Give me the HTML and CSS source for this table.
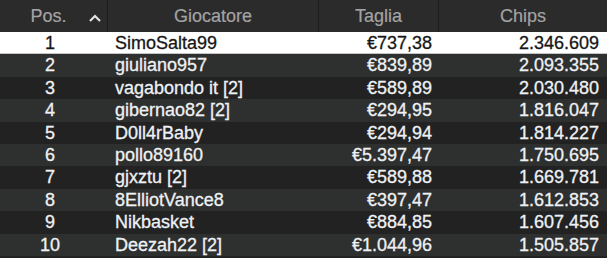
FILE: index.html
```html
<!DOCTYPE html>
<html lang="it">
<head>
  <meta charset="UTF-8">
  <title>Classifica</title>
  <link rel="stylesheet" href="styles.css">
</head>
<body>

  <div class="board">
    <div class="row head">
      <div class="cell pos-head">
        <span class="label">Pos.</span>
        <svg class="sort" width="12" height="8" viewBox="0 0 12 8">
          <polyline points="1,7 6,2 11,7" fill="none" stroke="#e2e2e2" stroke-width="2.2"/>
        </svg>
      </div>
      <div class="cell">Giocatore</div>
      <div class="cell">Taglia</div>
      <div class="cell">Chips</div>
    </div>

    <div class="row me">
      <div class="cell pos">1</div>
      <div class="cell name">SimoSalta99</div>
      <div class="cell num bounty">€737,38</div>
      <div class="cell num chips">2.346.609</div>
    </div>
    <div class="row">
      <div class="cell pos">2</div>
      <div class="cell name">giuliano957</div>
      <div class="cell num bounty">€839,89</div>
      <div class="cell num chips">2.093.355</div>
    </div>
    <div class="row">
      <div class="cell pos">3</div>
      <div class="cell name">vagabondo it [2]</div>
      <div class="cell num bounty">€589,89</div>
      <div class="cell num chips">2.030.480</div>
    </div>
    <div class="row">
      <div class="cell pos">4</div>
      <div class="cell name">gibernao82 [2]</div>
      <div class="cell num bounty">€294,95</div>
      <div class="cell num chips">1.816.047</div>
    </div>
    <div class="row">
      <div class="cell pos">5</div>
      <div class="cell name">D0ll4rBaby</div>
      <div class="cell num bounty">€294,94</div>
      <div class="cell num chips">1.814.227</div>
    </div>
    <div class="row">
      <div class="cell pos">6</div>
      <div class="cell name">pollo89160</div>
      <div class="cell num bounty">€5.397,47</div>
      <div class="cell num chips">1.750.695</div>
    </div>
    <div class="row">
      <div class="cell pos">7</div>
      <div class="cell name">gjxztu [2]</div>
      <div class="cell num bounty">€589,88</div>
      <div class="cell num chips">1.669.781</div>
    </div>
    <div class="row">
      <div class="cell pos">8</div>
      <div class="cell name">8ElliotVance8</div>
      <div class="cell num bounty">€397,47</div>
      <div class="cell num chips">1.612.853</div>
    </div>
    <div class="row">
      <div class="cell pos">9</div>
      <div class="cell name">Nikbasket</div>
      <div class="cell num bounty">€884,85</div>
      <div class="cell num chips">1.607.456</div>
    </div>
    <div class="row">
      <div class="cell pos">10</div>
      <div class="cell name">Deezah22 [2]</div>
      <div class="cell num bounty">€1.044,96</div>
      <div class="cell num chips">1.505.857</div>
    </div>
  </div>

</body>
</html>
```

FILE: styles.css
```css
body {
  margin: 0;
  padding: 0;
  background: #232323;
  font-family: 'Liberation Sans', Arial, sans-serif;
  font-size: 18px;
  color: #eef1f4;
}

.board {
  width: 607px;
}

.row {
  display: grid;
  grid-template-columns: 107px 211px 120px 1fr;
  height: 22.4px;
  line-height: 22.4px;
  background: #222222;
  white-space: nowrap;
  -webkit-text-stroke: 0.3px currentColor;
}

.row:nth-child(odd) {
  background: #2e3030;
}

/* header */
.row.head {
  height: 32px;
  line-height: 32px;
  background: #2b2b2b;
  color: #a3a3a3;
  -webkit-text-stroke: 0.2px currentColor;
}

.head .cell {
  text-align: center;
  border-left: 1px solid #1c1c1c;
}

.head .cell:first-child {
  border-left: none;
}

.pos-head {
  display: flex;
  align-items: center;
  padding-left: 8px;
}

.pos-head .label {
  flex: 1;
  text-align: center;
}

.sort {
  margin-right: 6px;
  margin-top: 3px;
}

/* current player row */
.row.me {
  background: #ffffff;
  color: #161616;
  border-bottom: 1px solid #c4c4c4;
  height: 21.4px;
}

.pos {
  text-align: center;
  padding-right: 7px;
}

.name {
  padding-left: 8px;
}

.num {
  text-align: right;
}

.bounty {
  padding-right: 6px;
}

.chips {
  padding-right: 8px;
}
```
